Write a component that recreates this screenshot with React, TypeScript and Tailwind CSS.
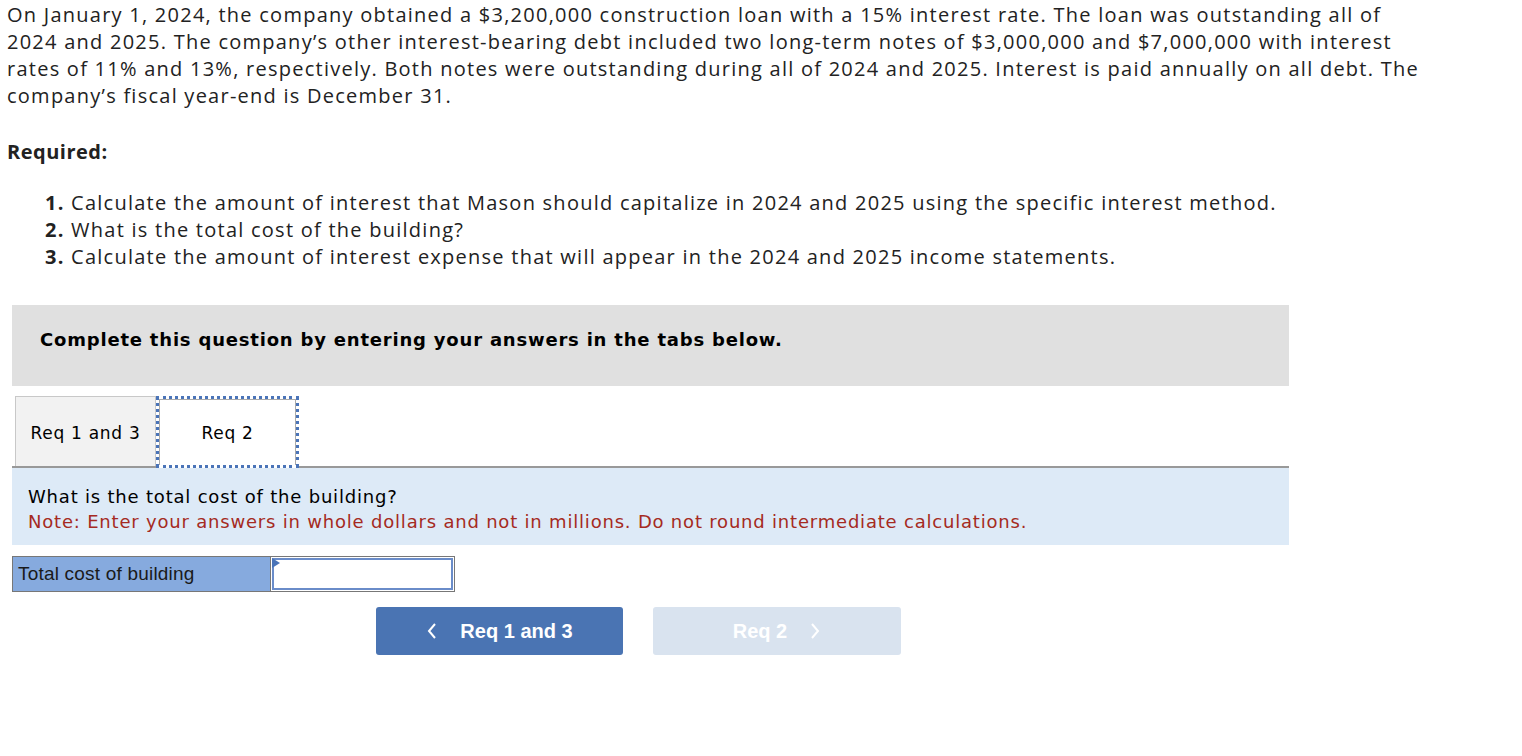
import React, { useState } from 'react'

const proxima = { fontFamily: '"Open Sans", "Noto Sans", Arial, sans-serif' }

const App = () => {
  const [amount, setAmount] = useState('')

  return (
    <div className="min-h-screen bg-white text-[#222]">
      <div className="pl-[7px] pt-[1px] text-[20px] leading-[27px] tracking-[1.25px]" style={proxima}>
        <p>
          On January 1, 2024, the company obtained a $3,200,000 construction loan with a 15% interest rate. The loan was outstanding all of
          <br />
          2024 and 2025. The company’s other interest-bearing debt included two long-term notes of $3,000,000 and $7,000,000 with interest
          <br />
          rates of 11% and 13%, respectively. Both notes were outstanding during all of 2024 and 2025. Interest is paid annually on all debt. The
          <br />
          company’s fiscal year-end is December 31.
        </p>
        <p className="mt-[29px] font-bold tracking-[0.5px]">Required:</p>
        <ol className="mt-[24px] pl-[38px]">
          <li>
            <span className="font-bold">1.</span> Calculate the amount of interest that Mason should capitalize in 2024 and 2025 using the specific interest method.
          </li>
          <li>
            <span className="font-bold">2.</span> What is the total cost of the building?
          </li>
          <li>
            <span className="font-bold">3.</span> Calculate the amount of interest expense that will appear in the 2024 and 2025 income statements.
          </li>
        </ol>
      </div>

      <div className="ml-[12px] w-[1277px]" style={{ fontFamily: '"DejaVu Sans", Verdana, sans-serif' }}>
        <div className="mt-[35px] h-[81px] bg-[#e0e0e0] pl-[28px] pt-[21px] text-[18px] font-bold tracking-[0.8px] text-black">
          Complete this question by entering your answers in the tabs below.
        </div>

        <div className="mt-[11px] flex h-[71px] items-end border-b-2 border-[#999]">
          <button className="ml-[3px] flex h-[70px] w-[141px] items-center justify-center border border-b-0 border-[#c8c8c8] bg-[#f2f2f2] pt-[4px] text-[17px] tracking-[0.7px] text-black">
            Req 1 and 3
          </button>
          <button className="relative -mb-[2px] flex h-[72px] w-[143px] items-center justify-center bg-white pt-[4px] text-[17px] tracking-[0.7px] text-black outline-[3px] outline-dotted -outline-offset-[3px] outline-[#4a74b8]">
            <span className="absolute inset-[3px] border border-b-0 border-[#aaa]" />
            Req 2
          </button>
        </div>

        <div className="h-[77px] bg-[#ddeaf7] pl-[16px] pt-[16px] text-[18px] leading-[25px] tracking-[0.8px]">
          <p className="text-black">What is the total cost of the building?</p>
          <p className="text-[#a52a22]">Note: Enter your answers in whole dollars and not in millions. Do not round intermediate calculations.</p>
        </div>

        <div className="mt-[11px] flex h-[36px] w-[443px] border border-[#777]" style={{ fontFamily: '"Liberation Sans", Arial, sans-serif' }}>
          <div className="flex w-[257px] items-center bg-[#86aade] pl-[5px] text-[19px] tracking-[0.2px] text-[#1a1a1a]">Total cost of building</div>
          <div className="relative flex-1 border-l border-[#777] bg-white p-[1px]">
            <input
              value={amount}
              onChange={(e) => setAmount(e.target.value)}
              className="h-full w-full border-2 border-[#6a8cc9] bg-white px-2 text-right text-[16px] outline-none"
            />
            <span className="absolute left-[1px] top-[1px] h-0 w-0 border-y-[5px] border-l-[8px] border-y-transparent border-l-[#4a74b8]" />
          </div>
        </div>

        <div className="mt-[15px] flex gap-[30px] pl-[364px]" style={{ fontFamily: '"Liberation Sans", Arial, sans-serif' }}>
          <button className="flex h-[48px] w-[247px] items-center justify-center gap-[22px] rounded-[3px] bg-[#4a74b3] text-[20px] font-bold text-white">
            <svg width="12" height="18" viewBox="0 0 12 18" fill="none" stroke="currentColor" strokeWidth="2">
              <path d="M9 2L3 9l6 7" />
            </svg>
            Req 1 and 3
          </button>
          <button className="flex h-[48px] w-[248px] items-center justify-center gap-[22px] rounded-[3px] bg-[#d9e3ef] text-[20px] font-bold text-white">
            Req 2
            <svg width="12" height="18" viewBox="0 0 12 18" fill="none" stroke="currentColor" strokeWidth="2">
              <path d="M3 2l6 7-6 7" />
            </svg>
          </button>
        </div>
      </div>
    </div>
  )
}

export default App
